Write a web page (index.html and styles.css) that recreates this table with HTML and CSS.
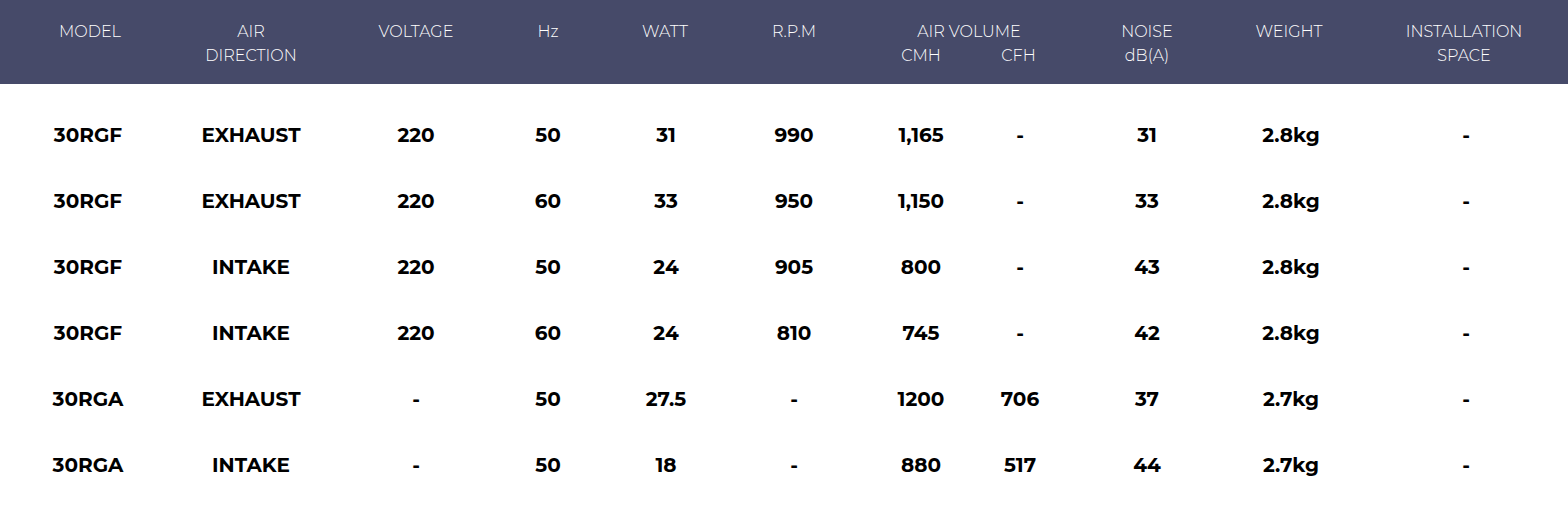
FILE: index.html
```html
<!DOCTYPE html>
<html>
<head>
<meta charset="utf-8">
<link rel="stylesheet" href="styles.css">
</head>
<body>
<div class="spec">
  <div class="head grid">
    <div class="cell model">MODEL</div>
    <div class="cell">AIR<br>DIRECTION</div>
    <div class="cell">VOLTAGE</div>
    <div class="cell">Hz</div>
    <div class="cell">WATT</div>
    <div class="cell">R.P.M</div>
    <div class="cell span2">
      <div class="airvol">AIR VOLUME</div>
      <div class="sub"><span>CMH</span><span class="cfh">CFH</span></div>
    </div>
    <div class="cell">NOISE<br>dB(A)</div>
    <div class="cell">WEIGHT</div>
    <div class="cell">INSTALLATION<br>SPACE</div>
  </div>
  <div class="body">
    <div class="row grid"><div>30RGF</div><div>EXHAUST</div><div>220</div><div>50</div><div>31</div><div>990</div><div>1,165</div><div>-</div><div>31</div><div>2.8kg</div><div>-</div></div>
    <div class="row grid"><div>30RGF</div><div>EXHAUST</div><div>220</div><div>60</div><div>33</div><div>950</div><div>1,150</div><div>-</div><div>33</div><div>2.8kg</div><div>-</div></div>
    <div class="row grid"><div>30RGF</div><div>INTAKE</div><div>220</div><div>50</div><div>24</div><div>905</div><div>800</div><div>-</div><div>43</div><div>2.8kg</div><div>-</div></div>
    <div class="row grid"><div>30RGF</div><div>INTAKE</div><div>220</div><div>60</div><div>24</div><div>810</div><div>745</div><div>-</div><div>42</div><div>2.8kg</div><div>-</div></div>
    <div class="row grid"><div>30RGA</div><div>EXHAUST</div><div>-</div><div>50</div><div>27.5</div><div>-</div><div>1200</div><div>706</div><div>37</div><div>2.7kg</div><div>-</div></div>
    <div class="row grid"><div>30RGA</div><div>INTAKE</div><div>-</div><div>50</div><div>18</div><div>-</div><div>880</div><div>517</div><div>44</div><div>2.7kg</div><div>-</div></div>
  </div>
</div>
</body>
</html>
```

FILE: styles.css
```css
html, body {
  margin: 0;
  padding: 0;
  background: #ffffff;
}
body {
  font-family: "Montserrat", "Inter", "Open Sans", sans-serif;
}
.spec {
  width: 1568px;
}
.grid {
  display: grid;
  grid-template-columns: 116px 210px 120px 144px 90px 168px 86px 112px 142px 142px 208px;
  padding-left: 30px;
  text-align: center;
}
.head {
  background: #464a69;
  color: #ffffff;
  font-size: 16px;
  font-weight: 300;
  line-height: 24px;
  padding-top: 20px;
  padding-bottom: 16px;
}
.model {
  padding-left: 4px;
}
.span2 {
  grid-column: span 2;
}
.airvol {
  padding-right: 16px;
}
.sub {
  display: grid;
  grid-template-columns: 86px 112px;
}
.cfh {
  padding-right: 3px;
}
.body {
  padding-top: 18px;
}
.row {
  height: 66px;
  align-items: center;
  font-size: 20px;
  font-weight: 700;
  color: #000000;
}
.row > :nth-child(5) {
  padding-left: 2px;
}
.row > :nth-child(10),
.row > :nth-child(11) {
  padding-left: 4px;
}
```
